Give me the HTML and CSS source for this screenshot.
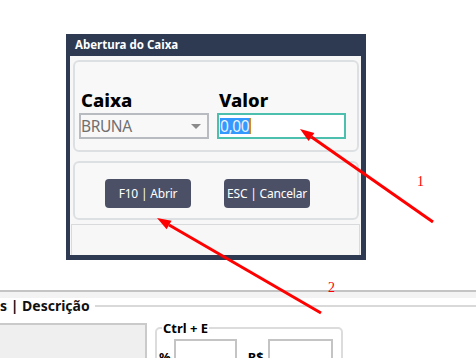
FILE: index.html
```html
<!DOCTYPE html>
<html lang="pt-BR">
<head>
    <meta charset="UTF-8">
    <title>Abertura do Caixa</title>
    <link rel="stylesheet" href="styles.css">
</head>
<body>
    <div class="page">
        <div class="stage">
            <div class="dialog">
                <div class="dialog-title">Abertura do Caixa</div>
                <div class="dialog-body">
                    <div class="panel panel-fields">
                        <div class="field field-caixa">
                            <label class="field-label">Caixa</label>
                            <div class="select-box">
                                <span>BRUNA</span>
                                <span class="select-arrow"></span>
                            </div>
                        </div>
                        <div class="field field-valor">
                            <label class="field-label">Valor</label>
                            <div class="value-box"><span class="value-selected">0,00</span><span class="caret"></span></div>
                        </div>
                    </div>
                    <div class="panel panel-buttons">
                        <button class="btn">F10 | Abrir</button>
                        <button class="btn">ESC | Cancelar</button>
                    </div>
                    <div class="dialog-footer"></div>
                </div>
            </div>
        </div>

        <div class="lower">
            <div class="lower-band"></div>
            <div class="group-title">
                <span class="group-text">s | Descrição</span>
                <span class="group-line"></span>
            </div>
            <div class="lower-row">
                <div class="desc-box"></div>
                <fieldset class="discount">
                    <legend>Ctrl + E</legend>
                    <div class="discount-row">
                        <span class="discount-label">%</span>
                        <div class="discount-input input-pct"></div>
                        <span class="discount-label label-rs">R$</span>
                        <div class="discount-input input-rs"></div>
                    </div>
                </fieldset>
            </div>
        </div>

        <!-- annotation arrows drawn over the screenshot -->
        <svg class="marks" width="476" height="358" viewBox="0 0 476 358">
            <line x1="433" y1="222" x2="311.5" y2="137" stroke="#ff0000" stroke-width="3"/>
            <polygon points="300,129 314.4,132.9 308.6,141.1" fill="#ff0000"/>
            <line x1="321" y1="313" x2="169.1" y2="225" stroke="#ff0000" stroke-width="3"/>
            <polygon points="157,218 171.6,220.7 166.6,229.3" fill="#ff0000"/>
            <text x="417" y="186" class="mark-num">1</text>
            <text x="328" y="292" class="mark-num">2</text>
        </svg>
    </div>
</body>
</html>
```

FILE: styles.css
```css
/* Global */
body {
    margin: 0;
    background: #ffffff;
    font-family: "Noto Sans", "Open Sans", sans-serif;
    color: #000000;
}

.page {
    position: relative;
    width: 476px;
    height: 358px;
    overflow: hidden;
}

.stage {
    height: 290px;
    padding: 34px 0 0 66px;
    box-sizing: border-box;
}

/* Dialog */
.dialog {
    width: 300px;
    height: 226px;
    background: #2d3a52;
    box-sizing: border-box;
    padding: 0 5px 5px 4px;
    display: flex;
    flex-direction: column;
}

.dialog-title {
    height: 22px;
    line-height: 22px;
    padding-left: 5px;
    color: #ffffff;
    font-size: 11.5px;
    font-weight: bold;
}

.dialog-body {
    flex: 1;
    background: #f7f7f7;
    padding: 4px 2px 0 3px;
    display: flex;
    flex-direction: column;
}

.panel {
    border: 2px solid #dde0e3;
    border-radius: 6px;
    background: #f8f8f8;
}

.panel-fields {
    height: 92px;
    box-sizing: border-box;
    padding: 26px 0 0 4px;
    display: flex;
    gap: 8px;
}

.field {
    display: flex;
    flex-direction: column;
}

.field-caixa { width: 130px; }
.field-valor { width: 129px; }

.field-label {
    font-size: 18.5px;
    font-weight: 800;
    line-height: 24px;
    padding-left: 2px;
    margin-bottom: 1px;
}

.select-box {
    height: 26px;
    box-sizing: border-box;
    border: 2px solid #b8bbbf;
    background: #f8f8f8;
    display: flex;
    align-items: center;
    justify-content: space-between;
    padding: 0 4px 0 0;
    font-size: 15.5px;
    letter-spacing: -0.4px;
    color: #707070;
}

.select-arrow {
    width: 0;
    height: 0;
    border-left: 5px solid transparent;
    border-right: 5px solid transparent;
    border-top: 5px solid #8a8a8a;
    margin-right: 2px;
}

.value-box {
    height: 26px;
    box-sizing: border-box;
    border: 2px solid #4dbfae;
    background: #ffffff;
    display: flex;
    align-items: center;
    padding-left: 1px;
    font-size: 15.5px;
    letter-spacing: -0.4px;
}

.value-selected {
    background: #3399ff;
    color: #e8f2ff;
    line-height: 16px;
    padding-right: 1px;
}

.caret {
    width: 1px;
    height: 16px;
    background: #d08a30;
}

.panel-buttons {
    margin-top: 9px;
    height: 59px;
    box-sizing: border-box;
    padding: 16px 0 0 30px;
    display: flex;
    align-items: flex-start;
    gap: 33px;
}

.btn {
    width: 86px;
    height: 29px;
    border: none;
    border-radius: 4px;
    background: #4b5067;
    color: #ffffff;
    font-family: "Noto Sans", "Open Sans", sans-serif;
    font-size: 12px;
    letter-spacing: -0.2px;
    padding: 0;
}

.dialog-footer {
    flex: 1;
    margin: 4px -1px 0 -2px;
    border: 1px solid #d9dadc;
    border-bottom: none;
}

/* Lower form */
.lower {
    border-top: 2px solid #c4c4c4;
}

.lower-band {
    height: 6px;
    background: #f3f3f3;
}

.group-title {
    display: flex;
    align-items: center;
    height: 16px;
}

.group-text {
    font-size: 14px;
    font-weight: bold;
    line-height: 16px;
    color: #111111;
}

.group-line {
    flex: 1;
    height: 2px;
    background: #d9d9d9;
    margin-left: 5px;
}

.lower-row {
    display: flex;
    align-items: flex-start;
    margin-top: 9px;
}

.desc-box {
    width: 149px;
    height: 60px;
    margin-left: -2px;
    box-sizing: border-box;
    border: 2px solid #cacaca;
    background: #efefef;
}

.discount {
    margin: -1px 0 0 8px;
    width: 188px;
    box-sizing: border-box;
    border: 2px solid #dcdcdc;
    border-radius: 5px;
    padding: 5px 0 0 2px;
}

.discount legend {
    font-size: 13px;
    font-weight: bold;
    padding: 0 1px;
    margin-left: 3px;
    line-height: 12px;
}

.discount-row {
    display: flex;
    align-items: flex-end;
}

.discount-label {
    font-size: 13px;
    font-weight: bold;
    line-height: 16px;
    padding-bottom: 2px;
}

.label-rs {
    margin-left: 11px;
}

.discount-input {
    height: 28px;
    box-sizing: border-box;
    border: 2px solid #c4c4c4;
    background: #ffffff;
}

.input-pct {
    width: 63px;
    margin-left: 3px;
}

.input-rs {
    width: 65px;
    margin-left: 4px;
}

/* Annotation overlay */
.marks {
    position: absolute;
    top: 0;
    left: 0;
}

.mark-num {
    font-family: "Liberation Serif", serif;
    font-size: 14px;
    fill: #ff0000;
}
```
